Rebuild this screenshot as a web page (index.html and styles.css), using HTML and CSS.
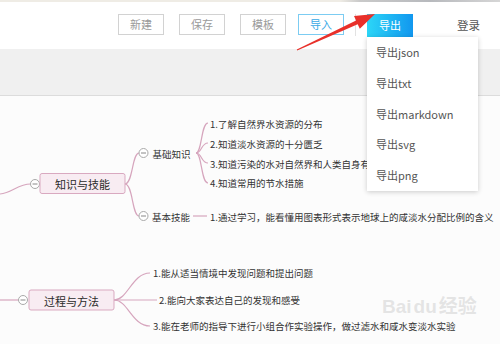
FILE: index.html
```html
<!DOCTYPE html>
<html lang="zh-CN">
<head>
    <meta charset="UTF-8">
    <title>思维导图</title>
    <link rel="stylesheet" href="styles.css">
</head>
<body>
<div class="page">
    <div class="strip"></div>

    <header class="topbar">
        <button class="btn btn-new">新建</button>
        <button class="btn btn-save">保存</button>
        <button class="btn btn-tpl">模板</button>
        <button class="btn btn-import">导入</button>
        <span class="sep"></span>
        <button class="btn btn-export">导出</button>
        <a class="login">登录</a>
    </header>

    <div class="toolbar"></div>

    <div class="canvas">
        <svg class="map" width="500" height="248" viewBox="0 96 500 248">
            <g class="links">
                <!-- 知识与技能 -->
                <path d="M0 194 C 12 193, 18 184, 30.5 184"/>
                <path d="M125 184 C 133 184, 132 153, 139 153"/>
                <path d="M125 184 C 133 184, 132 216, 139 216"/>
                <path d="M196 153 C 202 153, 201 123, 208 123"/>
                <path d="M196 153 C 202 153, 201 143, 208 143"/>
                <path d="M196 153 C 202 153, 201 163, 208 163"/>
                <path d="M196 153 C 202 153, 201 183, 208 183"/>
                <path d="M193 216 L207 216"/>
                <!-- 过程与方法 -->
                <path d="M0 300 L18.5 300"/>
                <path d="M114 300 C 128 300, 132 273, 150 273"/>
                <path d="M114 300 L157 300"/>
                <path d="M114 300 C 128 300, 132 326, 150 326"/>
            </g>

            <g class="toggle">
                <circle cx="35" cy="184" r="4.5"/><path d="M32.5 184 H37.5"/>
                <circle cx="143.5" cy="153" r="4.5"/><path d="M141 153 H146"/>
                <circle cx="143.5" cy="216" r="4.5"/><path d="M141 216 H146"/>
                <circle cx="23" cy="300" r="4.5"/><path d="M20.5 300 H25.5"/>
            </g>

            <rect class="main-node" x="40" y="173.5" width="85" height="20" rx="2"/>
            <rect class="main-node" x="29" y="290" width="85" height="20" rx="2"/>

            <g class="labels">
                <text class="main" x="82.5" y="184" text-anchor="middle">知识与技能</text>
                <text class="main" x="71.5" y="300.5" text-anchor="middle">过程与方法</text>

                <text class="sub" x="152.5" y="153.5">基础知识</text>
                <text class="sub" x="152" y="216.5">基本技能</text>

                <text x="210" y="123.5">1.了解自然界水资源的分布</text>
                <text x="210" y="143.5">2.知道淡水资源的十分匮乏</text>
                <text x="210" y="163.5">3.知道污染的水对自然界和人类自身有害</text>
                <text x="210" y="183">4.知道常用的节水措施</text>
                <text x="210" y="216.5">1.通过学习，能看懂用图表形式表示地球上的咸淡水分配比例的含义</text>

                <text x="153" y="273">1.能从适当情境中发现问题和提出问题</text>
                <text x="159" y="300">2.能向大家表达自己的发现和感受</text>
                <text x="153" y="326">3.能在老师的指导下进行小组合作实验操作，做过滤水和咸水变淡水实验</text>
            </g>
        </svg>
    </div>

    <ul class="export-menu">
        <li>导出json</li>
        <li>导出txt</li>
        <li>导出markdown</li>
        <li>导出svg</li>
        <li>导出png</li>
    </ul>

    <svg class="arrow" width="500" height="60" viewBox="0 0 500 60">
        <polygon points="296.8,49.5 356.1,20.6 354,16.1 375,14 359.8,28.7 357.7,24.2 297.2,50.5"/>
    </svg>

    <div class="watermark">
        <span class="wm-logo">Bai<b>du</b>经验</span>
    </div>
</div>
</body>
</html>
```

FILE: styles.css
```css
* {
    box-sizing: border-box;
}
body {
    margin: 0;
    font-family: "Noto Sans CJK SC", "Noto Sans", sans-serif;
    color: #333;
    background: #fcfcfc;
}
.page {
    position: relative;
    width: 500px;
    height: 344px;
    overflow: hidden;
}
.strip {
    height: 2px;
    background: linear-gradient(to right, #efece5 0%, #efece5 68%, #c9c9c9 72%, #b7b9bd 86%, #d6d6d6 100%);
}
.topbar {
    display: flex;
    align-items: center;
    height: 47px;
    padding: 0 0 2px 118px;
    background: #fff;
}
.btn {
    width: 46px;
    height: 21px;
    padding: 0;
    border: 1px solid #d2d2d2;
    border-radius: 0;
    background: #fff;
    color: #9a9a9a;
    font-family: inherit;
    font-size: 11px;
    line-height: 19px;
}
.btn-save,
.btn-tpl {
    margin-left: 15px;
}
.btn-import {
    margin-left: 12px;
    border-color: #7cccf2;
    color: #38a9e6;
}
.sep {
    width: 1px;
    height: 22px;
    margin-left: 11px;
    background: #e2e2e2;
}
.btn-export {
    height: 23px;
    margin-top: 2px;
    margin-left: 11px;
    border: none;
    background: linear-gradient(to right, #2cd6f7, #1197ef);
    color: #fff;
    line-height: 23px;
}
.login {
    margin-left: 44px;
    font-size: 11.5px;
    color: #555;
}
.toolbar {
    height: 47px;
    background: #f0f0f0;
    border-bottom: 1px solid #dcdcdc;
}
.canvas {
    background: #fcfcfc;
}
.map {
    display: block;
}
.links path {
    fill: none;
    stroke: #d6a5bd;
    stroke-width: 1.2;
}
.toggle circle {
    fill: #fff;
    stroke: #a9a9a9;
    stroke-width: 1;
}
.toggle path {
    stroke: #888;
    stroke-width: 1;
}
.main-node {
    fill: #f8ecf2;
    stroke: #d9a9c0;
    stroke-width: 1;
}
.labels text {
    font-size: 9.5px;
    fill: #333;
    dominant-baseline: central;
}
.labels .main {
    font-size: 11px;
    fill: #2a2a2a;
}
.labels .sub {
    font-size: 9.5px;
}
.export-menu {
    position: absolute;
    left: 367px;
    top: 37px;
    width: 111px;
    margin: 0;
    padding: 0;
    list-style: none;
    background: #fff;
    box-shadow: 0 1px 5px rgba(0, 0, 0, 0.2);
}
.export-menu li {
    height: 30.8px;
    line-height: 30.8px;
    padding-left: 9px;
    font-size: 11px;
    color: #555;
}
.arrow {
    position: absolute;
    left: 0;
    top: 0;
}
.arrow polygon {
    fill: #e8302a;
}
.watermark {
    position: absolute;
    left: 382px;
    top: 294px;
    color: rgba(205, 205, 205, 0.5);
}
.wm-logo {
    font-family: "Liberation Sans", "Noto Sans CJK SC", sans-serif;
    font-size: 19px;
    font-weight: bold;
    line-height: 24px;
}
.wm-logo b {
    margin: 0 2px;
}
```
